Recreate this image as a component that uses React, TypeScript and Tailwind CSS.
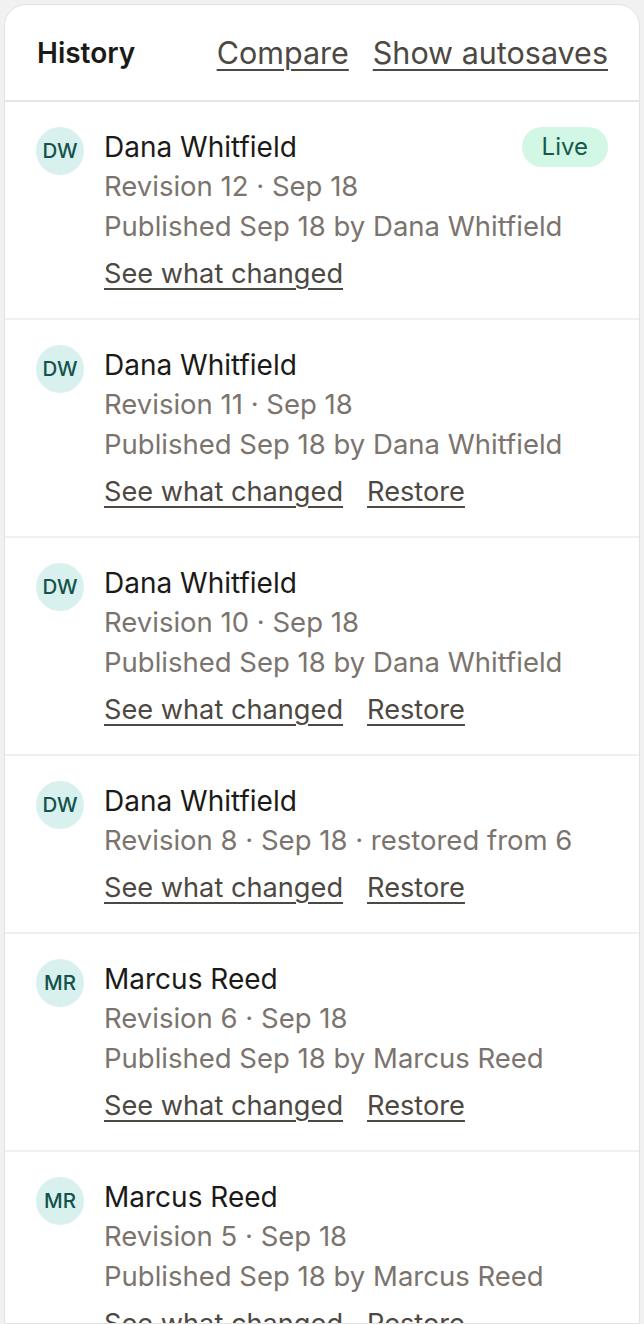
import { ReactNode } from "react";

interface Revision {
  initials: string;
  name: string;
  meta: string;
  published?: string;
  live?: boolean;
  restore: boolean;
}

const revisions: Revision[] = [
  { initials: "DW", name: "Dana Whitfield", meta: "Revision 12 · Sep 18", published: "Published Sep 18 by Dana Whitfield", live: true, restore: false },
  { initials: "DW", name: "Dana Whitfield", meta: "Revision 11 · Sep 18", published: "Published Sep 18 by Dana Whitfield", restore: true },
  { initials: "DW", name: "Dana Whitfield", meta: "Revision 10 · Sep 18", published: "Published Sep 18 by Dana Whitfield", restore: true },
  { initials: "DW", name: "Dana Whitfield", meta: "Revision 8 · Sep 18 · restored from 6", restore: true },
  { initials: "MR", name: "Marcus Reed", meta: "Revision 6 · Sep 18", published: "Published Sep 18 by Marcus Reed", restore: true },
  { initials: "MR", name: "Marcus Reed", meta: "Revision 5 · Sep 18", published: "Published Sep 18 by Marcus Reed", restore: true },
];

const LinkText = ({ children }: { children: ReactNode }) => (
  <a href="#" className="text-[#4d4842] underline decoration-[2px] underline-offset-[5px]">
    {children}
  </a>
);

const App = () => {
  return (
    <div className="min-h-[1324px] bg-[#f1f1f1] px-[4px] pt-[4px] font-['Inter',sans-serif]">
      <div className="rounded-t-[22px] border border-[#e2e2e2] bg-white h-[1320px] overflow-hidden">
        <div className="flex items-center justify-between h-[97px] pl-[32px] pr-[31px] border-b-2 border-[#e6e6e6]">
          <h2 className="text-[28px] font-semibold text-[#1c1a18]">History</h2>
          <div className="flex gap-[24px] text-[30.5px]">
            <LinkText>Compare</LinkText>
            <LinkText>Show autosaves</LinkText>
          </div>
        </div>

        {revisions.map((r, i) => (
          <div key={i} className="flex gap-[20px] pl-[31px] pr-[31px] pt-[25px] pb-[24px] border-b-2 border-[#f0f0f0]">
            <div className="w-[48px] h-[48px] shrink-0 rounded-full bg-[#d8f1ee] text-[#14524b] text-[20.5px] font-medium flex items-center justify-center">
              {r.initials}
            </div>
            <div className="flex-1 min-w-0">
              <div className="flex items-center justify-between h-[40px]">
                <span className="text-[28px] text-[#1c1a18]">{r.name}</span>
                {r.live && (
                  <span className="h-[40px] px-[20px] rounded-full bg-[#d2f7e5] text-[#175a4c] text-[24px] flex items-center">
                    Live
                  </span>
                )}
              </div>
              <div className="h-[40px] flex items-center text-[27.5px] text-[#7b746e]">{r.meta}</div>
              {r.published && (
                <div className="h-[40px] flex items-center text-[27.5px] text-[#7b746e]">{r.published}</div>
              )}
              <div className="mt-[7px] h-[40px] flex items-center gap-[24px] text-[27.2px]">
                <LinkText>See what changed</LinkText>
                {r.restore && <LinkText>Restore</LinkText>}
              </div>
            </div>
          </div>
        ))}
      </div>
    </div>
  );
};

export default App;
